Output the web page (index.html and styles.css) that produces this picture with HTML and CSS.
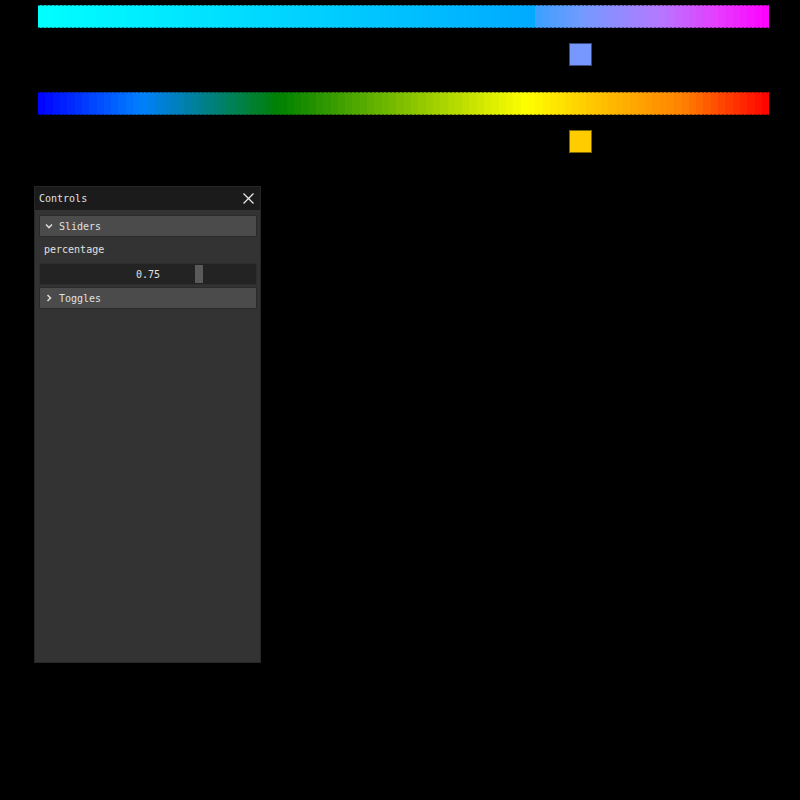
FILE: index.html
```html
<!DOCTYPE html>
<html>
<head>
<meta charset="utf-8">
<link rel="stylesheet" href="styles.css">
</head>
<body>
<div class="scales">
  <div class="bar" id="bar1"></div>
  <div class="marker-row"><div class="marker marker-a" style="margin-left:531px"></div></div>
  <div class="bar bar2" id="bar2"></div>
  <div class="marker-row"><div class="marker marker-b" style="margin-left:531px"></div></div>
</div>

<div class="panel">
  <div class="titlebar">
    <span class="title">Controls</span>
    <svg class="close" width="11" height="11" viewBox="0 0 11 11"><path d="M0.5 0.5 L10.5 10.5 M10.5 0.5 L0.5 10.5" stroke="#e6e6e6" stroke-width="1.3" fill="none"/></svg>
  </div>
  <div class="body">
    <div class="header">
      <svg class="chev" width="8" height="8" viewBox="0 0 8 8"><path d="M1 2.5 L4 5.5 L7 2.5" stroke="#d8d8d8" stroke-width="1.6" fill="none"/></svg>
      <span>Sliders</span>
    </div>
    <div class="label">percentage</div>
    <div class="slider">
      <span class="value">0.75</span>
      <div class="grab" style="left:155px"></div>
    </div>
    <div class="header">
      <svg class="chev" width="8" height="8" viewBox="0 0 8 8"><path d="M2.5 1 L5.5 4 L2.5 7" stroke="#d8d8d8" stroke-width="1.6" fill="none"/></svg>
      <span>Toggles</span>
    </div>
  </div>
</div>
<script src="script.js"></script>
</body>
</html>
```

FILE: styles.css
```css
html, body {
  margin: 0;
  padding: 0;
  background: #000;
}
body {
  width: 800px;
  height: 800px;
  overflow: hidden;
  font-family: "DejaVu Sans Mono", "Liberation Mono", monospace;
  font-size: 10px;
  color: #e0e0e0;
}
.scales {
  padding: 5px 0 0 38px;
  width: 732px;
}
.bar {
  position: relative;
  display: flex;
  height: 23px;
}
.bar .seg {
  flex: 1 1 0;
  height: 100%;
}
.bar::before, .bar::after {
  content: "";
  position: absolute;
  left: 0;
  right: 0;
  height: 1px;
  background: repeating-linear-gradient(90deg, rgba(0,0,0,0.45) 0 2px, rgba(0,0,0,0.15) 2px 4px);
}
.bar::before { top: 0; }
.bar::after { bottom: 0; }
.marker-row {
  height: 64px;
  padding-top: 15px;
  box-sizing: border-box;
}
.marker {
  width: 23px;
  height: 23px;
  box-sizing: border-box;
}
.marker-a {
  background: #7799ff;
  border: 1px solid #3a4a80;
}
.marker-b {
  background: #ffcc00;
  border: 1px solid #806600;
}
.panel {
  margin: 7px 0 0 34px;
  width: 227px;
  height: 477px;
  box-sizing: border-box;
  background: #333333;
  border: 1px solid #262626;
}
.titlebar {
  height: 23px;
  background: #1b1b1b;
  display: flex;
  align-items: center;
  justify-content: space-between;
  padding: 0 6px 0 4px;
}
.title {
  line-height: 12px;
  padding-top: 1px;
}
.close {
  display: block;
}
.body {
  padding: 5px 3px 0 4px;
  display: flex;
  flex-direction: column;
}
.header {
  height: 22px;
  box-sizing: border-box;
  background: #4b4b4b;
  border: 1px solid #2a2a2a;
  display: flex;
  align-items: center;
  padding-left: 5px;
  gap: 6px;
}
.chev { display: block; }
.label {
  height: 26px;
  line-height: 26px;
  padding-left: 5px;
}
.slider {
  position: relative;
  height: 22px;
  box-sizing: border-box;
  background: #232323;
  border: 1px solid #2d2d2d;
  display: flex;
  align-items: center;
  justify-content: center;
  margin-bottom: 2px;
}
.value {
  position: relative;
  z-index: 1;
}
.grab {
  position: absolute;
  top: 1px;
  bottom: 1px;
  width: 8px;
  background: #5a5a5a;
}
```

FILE: script.js
```js
function lerpStops(stops, t) {
  for (var i = 0; i < stops.length - 1; i++) {
    var a = stops[i], b = stops[i + 1];
    if (t >= a[0] && t <= b[0]) {
      var u = (t - a[0]) / (b[0] - a[0] || 1);
      return [0, 1, 2].map(function (k) { return Math.round(a[1][k] + (b[1][k] - a[1][k]) * u); });
    }
  }
  return stops[stops.length - 1][1];
}
function fill(id, stops) {
  var el = document.getElementById(id);
  var n = 100;
  for (var i = 0; i < n; i++) {
    var c = lerpStops(stops, (i + 0.5) / n);
    var d = document.createElement('div');
    d.className = 'seg';
    d.style.background = 'rgb(' + c.join(',') + ')';
    el.appendChild(d);
  }
}
fill('bar1', [
  [0, [0, 255, 255]],
  [0.68, [0, 170, 255]],
  [0.681, [60, 160, 255]],
  [0.75, [119, 153, 255]],
  [0.85, [180, 120, 255]],
  [0.93, [230, 60, 255]],
  [1, [255, 0, 255]]
]);
fill('bar2', [
  [0, [0, 0, 255]],
  [0.14, [0, 128, 255]],
  [0.33, [0, 128, 0]],
  [0.667, [255, 255, 0]],
  [0.75, [255, 204, 0]],
  [0.88, [255, 130, 0]],
  [1, [255, 0, 0]]
]);
```
